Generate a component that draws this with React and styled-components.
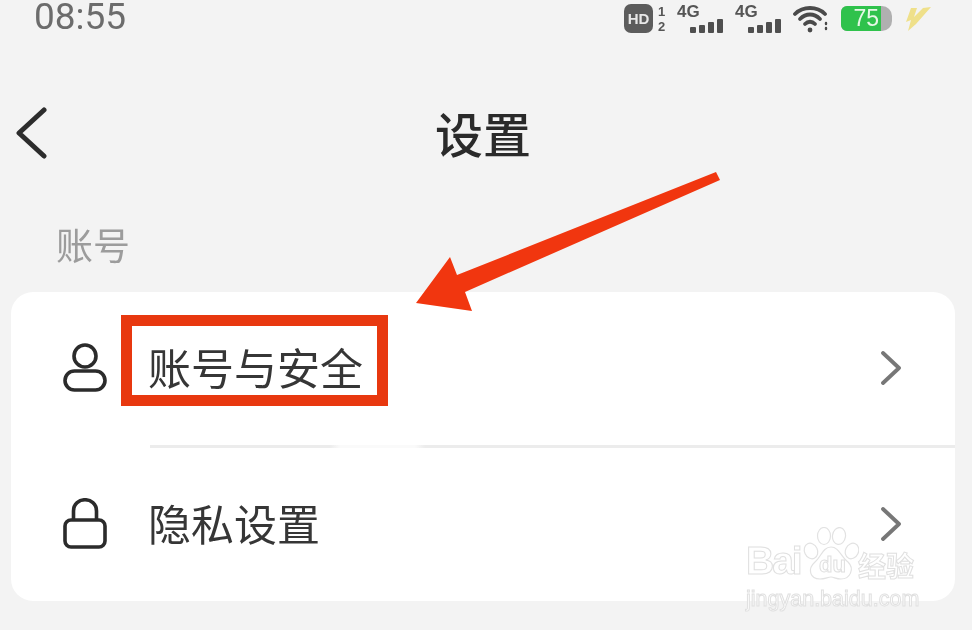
import React from "react";
import styled, { createGlobalStyle } from "styled-components";

const GlobalStyle = createGlobalStyle`
  html, body {
    margin: 0;
    padding: 0;
    background: #f3f3f3;
  }
  * {
    box-sizing: border-box;
  }
`;

function App() {
  return (
    <Page>
      <GlobalStyle />
      <StatusBar>
        <Time>08:55</Time>
        <StatusIcons>
          <HdGroup>
            <HdBadge>HD</HdBadge>
            <SimDigits>
              <span>1</span>
              <span>2</span>
            </SimDigits>
          </HdGroup>
          <Signal />
          <Signal />
          <WifiIcon />
          <Battery>
            <BatteryFill>75</BatteryFill>
          </Battery>
          <BoltIcon />
        </StatusIcons>
      </StatusBar>

      <NavBar>
        <BackIcon />
        <Title>设置</Title>
      </NavBar>

      <SectionLabel>账号</SectionLabel>

      <Card>
        <Row>
          <UserIcon />
          <RowLabel>账号与安全</RowLabel>
          <ChevronIcon />
        </Row>
        <Divider />
        <Row>
          <LockIcon />
          <RowLabel>隐私设置</RowLabel>
          <ChevronIcon />
        </Row>
      </Card>

      <RedBox />
      <ArrowOverlay viewBox="0 0 972 630">
        <path
          d="M416 303 L450 257 L457 275 L716 172 L720 180 L465 292 L472 311 Z"
          fill="#f1360f"
        />
      </ArrowOverlay>

      <Watermark>
        <WatermarkTop>
          <WatermarkBig>Bai</WatermarkBig>
          <Paw>
            <PawIcon />
            <PawText>du</PawText>
          </Paw>
          <WatermarkCn>经验</WatermarkCn>
        </WatermarkTop>
        <WatermarkUrl>jingyan.baidu.com</WatermarkUrl>
      </Watermark>
    </Page>
  );
}

export default App;

const SignalBars = [6, 8, 11, 14];

function Signal() {
  return (
    <SignalGroup>
      <SignalText>4G</SignalText>
      <Bars>
        {SignalBars.map((h) => (
          <Bar key={h} style={{ height: h }} />
        ))}
      </Bars>
    </SignalGroup>
  );
}

const WifiIcon = () => (
  <svg width="36" height="28" viewBox="0 0 36 28" fill="none" stroke="#4a4a4a" strokeWidth="3.8" strokeLinecap="round">
    <path d="M2 9 C10 1 24 1 32 9" />
    <path d="M7 14 C13 8 21 8 27 14" />
    <path d="M12 19 C15 16 19 16 22 19" />
    <circle cx="17" cy="25" r="2.4" fill="#4a4a4a" stroke="none" />
    <path d="M33 18 v1 M33 23 v1" strokeWidth="2.4" />
  </svg>
);

const BoltIcon = () => (
  <svg width="28" height="26" viewBox="0 0 28 26" fill="#efe08a">
    <path d="M7 2 L13 2 L10 11 L19 2 L27 1 L12 18 L4 25 L7 14 L2 16 Z" />
  </svg>
);

const BackIcon = () => (
  <svg width="31" height="52" viewBox="0 0 31 52" fill="none" stroke="#2c2c2c" strokeWidth="5" strokeLinecap="round" strokeLinejoin="round">
    <path d="M28 3 L3 26 L28 49" />
  </svg>
);

const UserIcon = () => (
  <IconBox>
    <svg width="44" height="50" viewBox="0 0 44 50" fill="none" stroke="#2b2b2b" strokeWidth="3.6">
      <circle cx="22" cy="13" r="11" />
      <rect x="2" y="28" width="40" height="19" rx="9.5" />
    </svg>
  </IconBox>
);

const LockIcon = () => (
  <IconBox>
    <svg width="44" height="52" viewBox="0 0 44 52" fill="none" stroke="#2b2b2b" strokeWidth="3.6">
      <path d="M10.5 21 V13 C10.5 -2 33.5 -2 33.5 13 V21" />
      <rect x="2" y="22" width="40" height="27" rx="6" />
    </svg>
  </IconBox>
);

const ChevronIcon = () => (
  <ChevronBox>
    <svg width="20" height="34" viewBox="0 0 20 34" fill="none" stroke="#777" strokeWidth="3.8" strokeLinecap="round" strokeLinejoin="round">
      <path d="M2 2 L18 17 L2 32" />
    </svg>
  </ChevronBox>
);

const PawIcon = () => (
  <svg width="56" height="54" viewBox="0 0 56 54" fill="#fff" stroke="#e2e2e2" strokeWidth="1.2">
    <ellipse cx="8" cy="24" rx="6.5" ry="8" transform="rotate(-25 8 24)" />
    <ellipse cx="21" cy="9" rx="6.5" ry="8.5" />
    <ellipse cx="36" cy="9" rx="6.5" ry="8.5" transform="rotate(8 36 9)" />
    <ellipse cx="49" cy="24" rx="6.5" ry="8" transform="rotate(25 49 24)" />
    <path d="M28 20 C36 20 38 30 45 35 C52 42 47 52 38 52 C33 52 31 50 28 50 C25 50 22 52 17 52 C7 52 4 42 12 35 C18 30 20 20 28 20 Z" />
  </svg>
);

const cjk = `"Noto Sans CJK SC", "Noto Sans", sans-serif`;

const Page = styled.div`
  position: relative;
  width: 972px;
  height: 630px;
  overflow: hidden;
  background: #f3f3f3;
  font-family: ${cjk};
  filter: blur(0.4px);
`;

const StatusBar = styled.div`
  display: flex;
  align-items: center;
  justify-content: space-between;
  height: 37px;
  padding: 0 40px 0 34px;
`;

const Time = styled.div`
  align-self: flex-start;
  font-family: Roboto, "Liberation Sans", sans-serif;
  font-size: 37px;
  line-height: 34px;
  color: #6c6c6c;
`;

const StatusIcons = styled.div`
  display: flex;
  align-items: center;
  gap: 12px;
`;

const HdGroup = styled.div`
  display: flex;
  align-items: center;
  gap: 5px;
  width: 41px;
`;

const HdBadge = styled.div`
  flex: none;
  width: 29px;
  height: 29px;
  border-radius: 7px;
  background: #5c5c5c;
  color: #e8e8e8;
  font-family: "Liberation Sans", sans-serif;
  font-size: 15px;
  font-weight: 700;
  line-height: 29px;
  text-align: center;
`;

const SimDigits = styled.div`
  display: flex;
  flex-direction: column;
  font-family: "Liberation Sans", sans-serif;
  font-size: 13px;
  font-weight: 700;
  line-height: 15px;
  color: #555;
`;

const SignalGroup = styled.div`
  position: relative;
  width: 46px;
  height: 28px;
`;

const SignalText = styled.span`
  position: absolute;
  left: 0;
  top: -2px;
  font-family: "Liberation Sans", sans-serif;
  font-size: 17px;
  font-weight: 700;
  line-height: 18px;
  color: #555;
`;

const Bars = styled.div`
  position: absolute;
  right: 0;
  bottom: 0;
  display: flex;
  align-items: flex-end;
  gap: 3px;
`;

const Bar = styled.div`
  width: 6px;
  background: #4f4f4f;
  border-radius: 1px;
`;

const Battery = styled.div`
  display: flex;
  width: 51px;
  height: 25px;
  border-radius: 6px 10px 10px 6px;
  background: #b0b0b0;
  overflow: hidden;
`;

const BatteryFill = styled.div`
  width: 40px;
  padding-right: 2px;
  background: #2fc24c;
  color: #e6f7e6;
  font-family: "Liberation Sans", sans-serif;
  font-size: 23px;
  line-height: 25px;
  text-align: right;
`;

const NavBar = styled.div`
  position: relative;
  display: flex;
  align-items: center;
  justify-content: center;
  height: 88px;
  margin-top: 51px;
  padding-right: 6px;

  svg {
    position: absolute;
    left: 16px;
    top: 19px;
  }
`;

const Title = styled.div`
  font-size: 48px;
  font-weight: 500;
  line-height: 60px;
  color: #2a2a2a;
`;

const SectionLabel = styled.div`
  height: 50px;
  margin-top: 45px;
  padding-left: 56px;
  font-size: 37px;
  line-height: 46px;
  color: #9c9c9c;
`;

const Card = styled.div`
  width: 944px;
  margin: 21px 0 0 11px;
  border-radius: 22px;
  background: #fff;
`;

const Row = styled.div`
  display: flex;
  align-items: center;
  height: 153px;
  padding: 0 54px 2px 52px;
`;

const IconBox = styled.div`
  display: flex;
  width: 44px;
  margin-right: 41px;
`;

const RowLabel = styled.div`
  flex: 1;
  padding-bottom: 4px;
  font-size: 43px;
  line-height: 60px;
  color: #363636;
`;

const ChevronBox = styled.div`
  display: flex;
`;

const Divider = styled.div`
  height: 3px;
  margin-left: 139px;
  background: linear-gradient(
    to right,
    #ececec 0,
    #ececec 180px,
    #fafafa 190px,
    #fafafa 265px,
    #ececec 275px
  );
`;

const RedBox = styled.div`
  position: absolute;
  left: 121px;
  top: 315px;
  width: 267px;
  height: 91px;
  border: 11px solid #e8380f;
`;

const ArrowOverlay = styled.svg`
  position: absolute;
  inset: 0;
  width: 972px;
  height: 630px;
  pointer-events: none;
`;

const Watermark = styled.div`
  position: absolute;
  left: 746px;
  top: 525px;
  display: flex;
  flex-direction: column;
  color: #fff;
  -webkit-text-stroke: 1px #e0e0e0;
`;

const WatermarkTop = styled.div`
  display: flex;
  align-items: flex-end;
  height: 56px;
`;

const WatermarkBig = styled.span`
  width: 57px;
  font-family: "Liberation Sans", sans-serif;
  font-size: 39px;
  font-weight: 700;
  letter-spacing: -2px;
  line-height: 40px;
`;

const Paw = styled.div`
  position: relative;
  width: 56px;
  height: 54px;
`;

const PawText = styled.span`
  position: absolute;
  left: 16px;
  top: 26px;
  font-family: "Liberation Sans", sans-serif;
  font-size: 22px;
  font-weight: 700;
  line-height: 24px;
`;

const WatermarkCn = styled.span`
  margin-left: -1px;
  font-size: 28px;
  font-weight: 700;
  line-height: 32px;
`;

const WatermarkUrl = styled.div`
  margin-top: 6px;
  font-family: "Liberation Sans", sans-serif;
  font-size: 21.5px;
  line-height: 24px;
`;
